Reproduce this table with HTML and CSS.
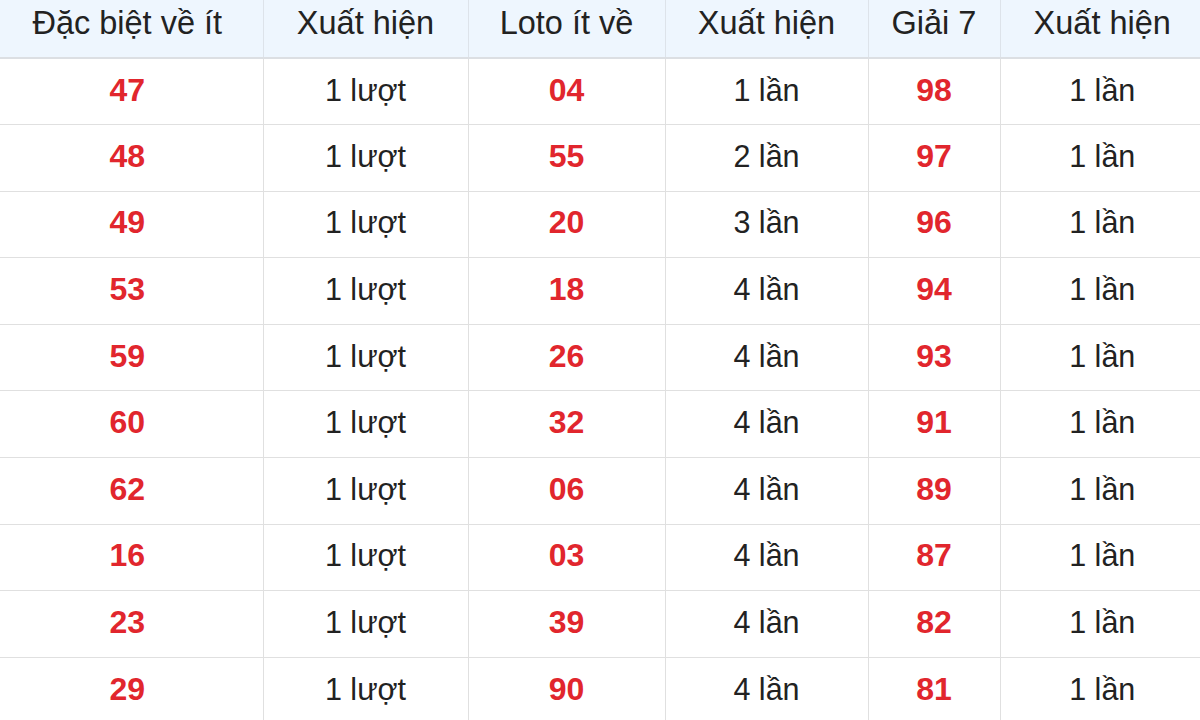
FILE: index.html
```html
<!DOCTYPE html>
<html lang="vi">
<head>
<meta charset="utf-8">
<link rel="stylesheet" href="styles.css">
</head>
<body>
<table class="stats">
  <colgroup>
    <col class="c1"><col class="c2"><col class="c3"><col class="c4"><col class="c5"><col class="c6">
  </colgroup>
  <thead>
    <tr>
      <th>Đặc biệt về ít</th><th>Xuất hiện</th><th>Loto ít về</th><th>Xuất hiện</th><th>Giải 7</th><th>Xuất hiện</th>
    </tr>
  </thead>
  <tbody>
    <tr><td class="num">47</td><td>1 lượt</td><td class="num">04</td><td>1 lần</td><td class="num">98</td><td>1 lần</td></tr>
    <tr><td class="num">48</td><td>1 lượt</td><td class="num">55</td><td>2 lần</td><td class="num">97</td><td>1 lần</td></tr>
    <tr><td class="num">49</td><td>1 lượt</td><td class="num">20</td><td>3 lần</td><td class="num">96</td><td>1 lần</td></tr>
    <tr><td class="num">53</td><td>1 lượt</td><td class="num">18</td><td>4 lần</td><td class="num">94</td><td>1 lần</td></tr>
    <tr><td class="num">59</td><td>1 lượt</td><td class="num">26</td><td>4 lần</td><td class="num">93</td><td>1 lần</td></tr>
    <tr><td class="num">60</td><td>1 lượt</td><td class="num">32</td><td>4 lần</td><td class="num">91</td><td>1 lần</td></tr>
    <tr><td class="num">62</td><td>1 lượt</td><td class="num">06</td><td>4 lần</td><td class="num">89</td><td>1 lần</td></tr>
    <tr><td class="num">16</td><td>1 lượt</td><td class="num">03</td><td>4 lần</td><td class="num">87</td><td>1 lần</td></tr>
    <tr><td class="num">23</td><td>1 lượt</td><td class="num">39</td><td>4 lần</td><td class="num">82</td><td>1 lần</td></tr>
    <tr><td class="num">29</td><td>1 lượt</td><td class="num">90</td><td>4 lần</td><td class="num">81</td><td>1 lần</td></tr>
  </tbody>
</table>
</body>
</html>
```
FILE: styles.css
```css
html, body {
  margin: 0;
  padding: 0;
  background: #ffffff;
  overflow: hidden;
}
.stats {
  width: 1200px;
  border-collapse: collapse;
  table-layout: fixed;
  font-family: "Liberation Sans", Arial, sans-serif;
  color: #222222;
}
.c1 { width: 263px; }
.c2 { width: 205px; }
.c3 { width: 197px; }
.c4 { width: 203px; }
.c5 { width: 132px; }
.c6 { width: 200px; }
.stats th {
  height: 58px;
  padding: 0 0 10px 0;
  box-sizing: border-box;
  background: #eef6fe;
  font-weight: normal;
  font-size: 32.5px;
  text-align: center;
  border-bottom: 2px solid #dcdfe3;
  border-left: 1px solid #dde3ea;
}
.stats td {
  height: 66.6px;
  padding: 0 0 3px 0;
  box-sizing: border-box;
  text-align: center;
  font-size: 30.5px;
  border-bottom: 1px solid #e0e0e0;
  border-left: 1px solid #e0e0e0;
}
.stats th:first-child,
.stats td:first-child {
  border-left: none;
  padding-right: 8px;
}
.stats th:last-child,
.stats td:last-child {
  padding-left: 4px;
}
.stats td.num {
  color: #e1262d;
  font-weight: bold;
  font-size: 32px;
}
```
